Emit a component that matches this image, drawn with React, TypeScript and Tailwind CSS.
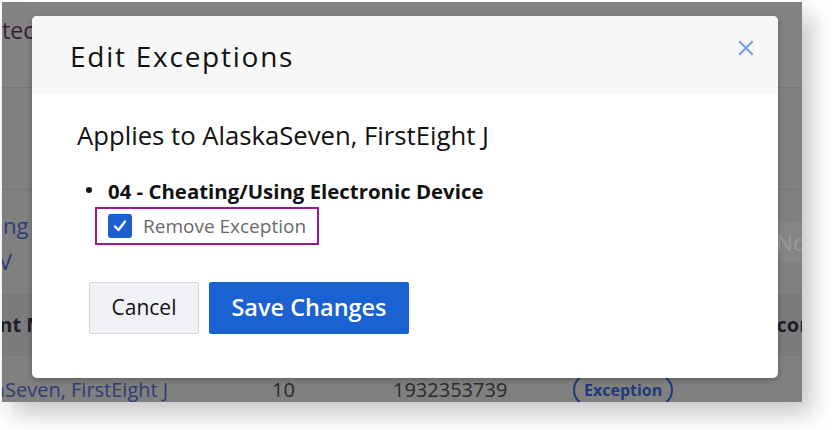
import React from "react";

export default function App() {
  return (
    <div className="w-[832px] h-[430px] bg-white pl-[2px] pt-[2px]" style={{ fontFamily: '"Open Sans", sans-serif' }}>
      <div className="relative w-[800px] h-[400px] overflow-hidden bg-[#808080] shadow-[10px_12px_22px_rgba(0,0,0,0.22)]">
        {/* background page (dimmed) */}
        <div className="flex flex-col">
          <div className="h-[86px] border-b border-[#777] bg-[#838383] pt-[13px]">
            <div className="ml-[-37px] text-[23px] leading-[30px] text-[#3a1c3c]">Protected</div>
          </div>
          <div className="h-[102px] border-b border-[#777]" />
          <div className="h-[105px] border-b border-[#777] flex justify-between">
            <div className="pt-[17px] text-[22px] leading-[36px] text-[#2e3d73]">
              <div className="ml-[-57px]">Pending</div>
              <div className="ml-[-32px]">ENV</div>
            </div>
            <div className="mr-[-30px] mt-[32px] h-[40px] bg-[#858585] pl-[4px] text-[22px] leading-[40px] text-[#9a9a9a]">None</div>
          </div>
          <div className="h-[60px] border-b border-[#777] bg-[#7b7b7b] flex justify-between items-center">
            <div className="ml-[-60px] text-[20px] font-bold text-[#1e1e28]">Student Name</div>
            <div className="mr-[-19px] text-[20px] font-bold text-[#1e1e28]">Record</div>
          </div>
          <div className="h-[60px] flex items-start pt-[20px] text-[20px] leading-[30px]">
            <div className="ml-[-57px] w-[327px] shrink-0 whitespace-nowrap text-[#2e3d73]">AlaskaSeven, FirstEight J</div>
            <div className="w-[121px] shrink-0 text-[#2a2a2a]">10</div>
            <div className="w-[180px] shrink-0 text-[#2a2a2a]">1932353739</div>
            <div className="h-[34px] mt-[-2px] rounded-full border-2 border-[#1f3a7a] px-[9px] text-[16px] leading-[30px] font-bold text-[#1f3a7a]">Exception</div>
          </div>
        </div>

        {/* modal */}
        <div className="absolute left-[30px] top-[14px] w-[746px] h-[362px] bg-white rounded-[5px] overflow-hidden shadow-[0_2px_6px_rgba(0,0,0,0.25)]">
          <div className="h-[78px] bg-[#f7f7f7] flex items-center justify-between pl-[38px] pr-[24px]">
            <h1 className="text-[28px] leading-[36px] tracking-[1.75px] text-[#111] font-normal mt-[2px]">Edit Exceptions</h1>
            <svg width="16" height="16" viewBox="0 0 16 16" className="mb-[14px]">
              <path d="M2 2 L14 14 M14 2 L2 14" stroke="#6f9ee2" strokeWidth="2" strokeLinecap="square" />
            </svg>
          </div>
          <div className="pl-[45px] pt-[26px]">
            <h2 className="text-[25.7px] leading-[32px] text-[#111] font-normal whitespace-nowrap">Applies to AlaskaSeven, FirstEight J</h2>
            <ul className="mt-[26px]">
              <li className="flex items-start">
                <span className="w-[31px] shrink-0 pl-[9px] pt-[9px]">
                  <span className="block w-[6px] h-[6px] rounded-full bg-[#111]" />
                </span>
                <div>
                  <div className="text-[20.4px] leading-[26px] font-bold text-[#111] whitespace-nowrap">04 - Cheating/Using Electronic Device</div>
                  <label className="mt-[3px] ml-[-13px] flex items-center gap-[11px] w-[224px] h-[38px] border-2 border-[#9b1a8a] pl-[11px]">
                    <span className="w-[24px] h-[24px] shrink-0 rounded-[3px] bg-[#1b5fd1] flex items-center justify-center">
                      <svg width="16" height="16" viewBox="0 0 16 16">
                        <path d="M3 8.5 L6.5 12 L13 3.5" fill="none" stroke="white" strokeWidth="2.4" strokeLinecap="round" strokeLinejoin="round" />
                      </svg>
                    </span>
                    <span className="text-[19px] leading-[26px] text-[#6a6a6a] whitespace-nowrap">Remove Exception</span>
                  </label>
                </div>
              </li>
            </ul>
            <div className="mt-[37px] ml-[12px] flex gap-[10px]">
              <button className="w-[110px] h-[52px] bg-[#f1f2f6] border border-[#d4d5d8] rounded-[2px] text-[21px] text-[#111]">Cancel</button>
              <button className="w-[200px] h-[52px] bg-[#1a62d2] rounded-[2px] text-[23.5px] font-semibold text-white">Save Changes</button>
            </div>
          </div>
        </div>
      </div>
    </div>
  );
}
